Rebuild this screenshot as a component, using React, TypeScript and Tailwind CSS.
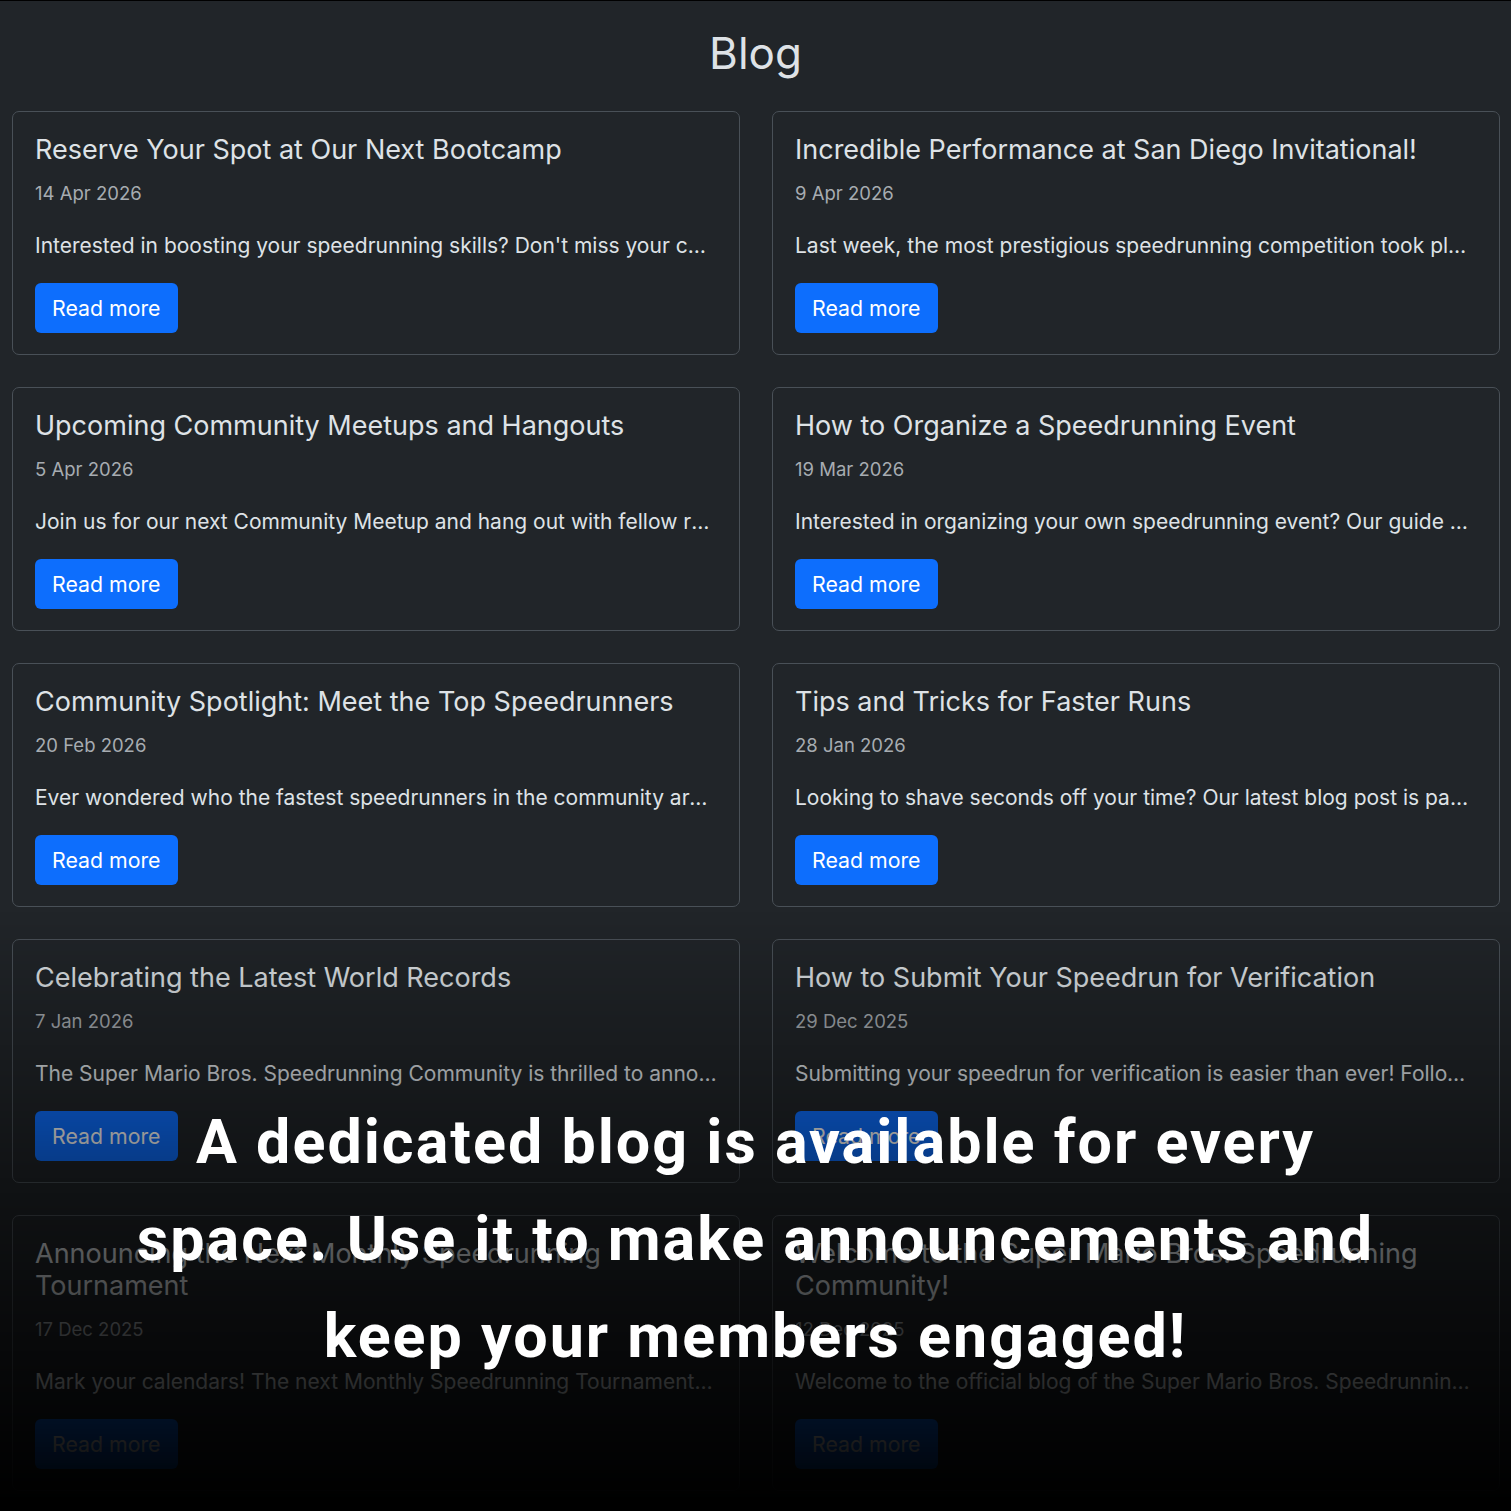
import React from "react"

const posts = [
  { title: "Reserve Your Spot at Our Next Bootcamp", date: "14 Apr 2026", text: "Interested in boosting your speedrunning skills? Don't miss your chance to join our next bootcamp." },
  { title: "Incredible Performance at San Diego Invitational!", date: "9 Apr 2026", text: "Last week, the most prestigious speedrunning competition took place in San Diego." },
  { title: "Upcoming Community Meetups and Hangouts", date: "5 Apr 2026", text: "Join us for our next Community Meetup and hang out with fellow runners from around the world." },
  { title: "How to Organize a Speedrunning Event", date: "19 Mar 2026", text: "Interested in organizing your own speedrunning event? Our guide covers everything you need." },
  { title: "Community Spotlight: Meet the Top Speedrunners", date: "20 Feb 2026", text: "Ever wondered who the fastest speedrunners in the community are? Read on to find out." },
  { title: "Tips and Tricks for Faster Runs", date: "28 Jan 2026", text: "Looking to shave seconds off your time? Our latest blog post is packed with advice." },
  { title: "Celebrating the Latest World Records", date: "7 Jan 2026", text: "The Super Mario Bros. Speedrunning Community is thrilled to announce several new world records." },
  { title: "How to Submit Your Speedrun for Verification", date: "29 Dec 2025", text: "Submitting your speedrun for verification is easier than ever! Follow these simple steps." },
  { title: "Announcing the Next Monthly Speedrunning Tournament", date: "17 Dec 2025", text: "Mark your calendars! The next Monthly Speedrunning Tournament is just around the corner." },
  { title: "Welcome to the Super Mario Bros. Speedrunning Community!", date: "12 Dec 2025", text: "Welcome to the official blog of the Super Mario Bros. Speedrunning Community." },
]

const PostCard = ({ title, date, text }: { title: string; date: string; text: string }) => (
  <div className="flex flex-col items-start border border-[#495057] rounded-[7px] px-[22px] pt-[22px] pb-[21px] bg-[#212529]">
    <h5 className="text-[27px] leading-[32px] text-[#dee2e6] font-normal">{title}</h5>
    <div className="mt-[14px] text-[18.5px] leading-[27px] text-[#a7acb1]">{date}</div>
    <p className="mt-[24px] w-full text-[21px] leading-[30px] text-[#dee2e6] truncate">{text}</p>
    <button
      type="button"
      className="mt-[22px] h-[50px] px-[17px] rounded-[6px] bg-[#0d6efd] text-white text-[21.3px] leading-[30px]"
    >
      Read more
    </button>
  </div>
)

export default function App() {
  return (
    <div className="min-h-screen bg-[#212529] border-t border-black font-['Inter','Noto_Sans',sans-serif]">
      <h1 className="pt-[26px] pb-[31px] text-center text-[44px] leading-[53px] text-[#dee2e6] font-normal">Blog</h1>
      <div className="grid grid-cols-2 gap-x-8 gap-y-8 pl-3 pr-[11px] pb-8">
        {posts.map((p) => (
          <PostCard key={p.title} {...p} />
        ))}
      </div>

      {/* promo overlay */}
      <div className="fixed inset-x-0 bottom-0 h-[600px] bg-gradient-to-b from-transparent via-[rgba(0,0,0,0.55)] to-black flex items-end justify-center pb-[126px] pointer-events-none">
        <p className="max-w-[1280px] text-center text-white font-bold text-[61px] leading-[97px] tracking-[2px] font-['Roboto','Liberation_Sans',sans-serif]">
          A dedicated blog is available for every space. Use it to make announcements and keep your members engaged!
        </p>
      </div>
    </div>
  )
}
